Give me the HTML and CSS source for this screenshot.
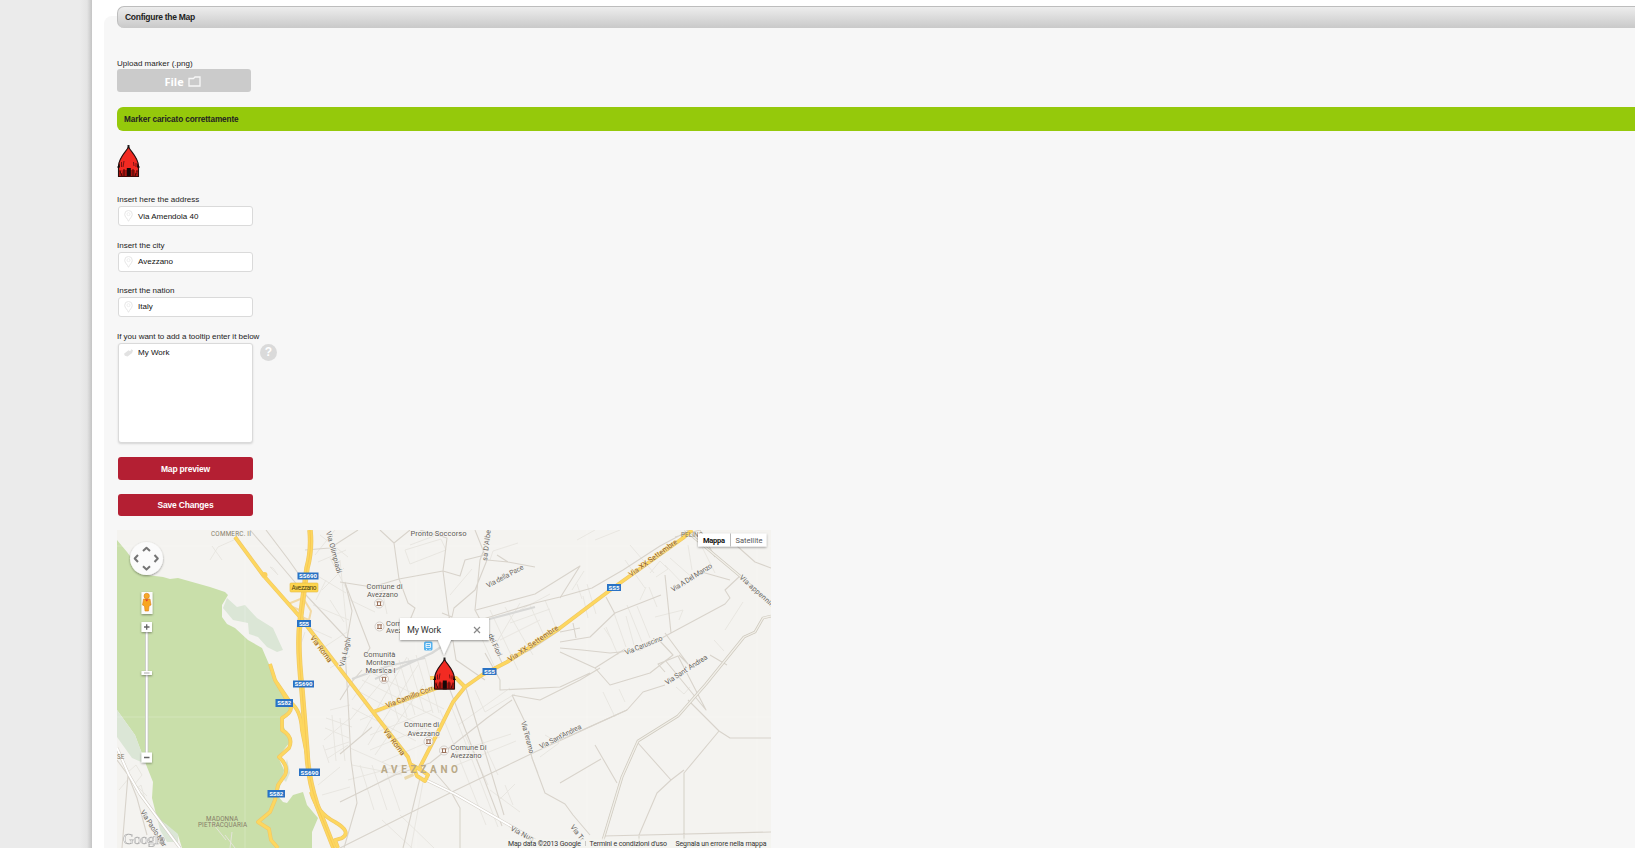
FILE: index.html
```html
<!DOCTYPE html>
<html lang="en">
<head>
<meta charset="utf-8">
<title>Configure the Map</title>
<link rel="stylesheet" href="styles.css">
</head>
<body>
<svg width="0" height="0" class="defs" aria-hidden="true">
  <defs>
    <symbol id="hut" viewBox="0 0 23 32">
      <path d="M10.500 0h2v4h-2z" fill="#222"/>
      <path d="M11.500 2C9 7 2 12 1.500 21v10.500h20V21C21 12 14 7 11.500 2z" fill="#f22a22" stroke="#211" stroke-width="1.100"/>
      <path d="M2 25h19v6.500H2z" fill="#a81510"/>
      <path d="M0 22.500l2.500-4 .5 4zM23 22.500l-2.500-4-.5 4z" fill="#150808"/>
      <path d="M9.800 23h4v9h-4z" fill="#150808"/>
      <path d="M4.500 17v5M7 16l-1 6M16.500 17l.5 4M19 18v4" stroke="#6a1010" fill="none" stroke-width=".9"/>
      <path d="M7 24v7M16 24v7M3 26l2 5M20 26l-2 5M1.500 31.500h20" stroke="#400a08" fill="none"/>
      <path d="M5.500 23l-1 5M18 23l1 5" stroke="#ee3028" fill="none"/>
    </symbol>
    <symbol id="pin" viewBox="0 0 9 12">
      <path d="M4.500 11.300C3.500 8.500.7 7 .7 4.300a3.800 3.800 0 0 1 7.600 0C8.300 7 5.500 8.500 4.500 11.300z" fill="none" stroke="#e6e6e6"/>
      <circle cx="4.500" cy="4.200" r="1.500" fill="none" stroke="#e9e9e9" stroke-width=".8"/>
    </symbol>
  </defs>
</svg>
<div class="page">
  <aside class="side"></aside>
  <main class="main">
    <section class="panel">
      <h1 class="bar">Configure the Map</h1>
      <div class="label label-upload">Upload marker (.png)</div>
      <button class="file">File
        <svg width="13" height="11" viewBox="0 0 13 11"><path d="M1 2.500h4.500L7 1h5v9H1z" fill="none" stroke="#fff" stroke-width="1.300" opacity=".85"/></svg>
      </button>
      <div class="notice">Marker caricato correttamente</div>
      <svg class="marker" width="23" height="32"><use href="#hut"/></svg>
      <div class="field">
        <div class="label l1">Insert here the address</div>
        <div class="input"><svg width="9" height="12"><use href="#pin"/></svg><span class="v1">Via Amendola 40</span></div>
      </div>
      <div class="field">
        <div class="label">Insert the city</div>
        <div class="input"><svg width="9" height="12"><use href="#pin"/></svg><span>Avezzano</span></div>
      </div>
      <div class="field">
        <div class="label">Insert the nation</div>
        <div class="input"><svg width="9" height="12"><use href="#pin"/></svg><span>Italy</span></div>
      </div>
      <div class="field last">
        <div class="label l4">If you want to add a tooltip enter it below</div>
        <div class="row">
          <div class="input area"><svg width="9" height="9" viewBox="0 0 10 9"><path d="M0 6l5-4 2 1 1-2 2 1-1 3-5 4-3-1z" fill="#e2e2e2"/></svg><span>My Work</span></div>
          <span class="help">?</span>
        </div>
      </div>
      <button class="btn preview">Map preview</button>
      <button class="btn save">Save Changes</button>
      <svg class="map" width="654" height="318" viewBox="117 530 654 318">
        <defs>
          <filter id="sh" x="-20%" y="-20%" width="140%" height="150%"><feDropShadow dx="0" dy="1" stdDeviation="1.300" flood-opacity=".4"/></filter>
        </defs>
        <rect x="117" y="530" width="654" height="318" fill="#f4f3f0"/>
        <path class="woods" d="M117 540L127 552L136 564L147 575L163 577L170 579L178 578L210 587L225 592L228 595L222 605L222 617L227 624L235 628L248 640L262 648L268 662L277 682L290 704L290 712L282 722L290 742L278 757L285 772L277 795L283 802L287 803L293 795L303 792L307 805L318 818L312 832L312 848H182L178 835L157 818L152 798L153 782L145 762L135 735L117 710z"/>
        <path class="park" d="M227 598L237 607L245 605L257 618L273 628L283 650L277 652L267 647L258 637L249 634L248 623L233 620L223 608zM117 710L135 735L146 764L132 758L117 737zM157 818L166 824L178 834L178 842L167 842L160 830zM287 759L290 773L286 782L282 778z"/>
        <g class="grid"><path d="M117 546H771M117 717H771M245 530V848M416 530V848M587 530V848M757 530V848"/></g>

        <g class="street">
          <path d="M210 560l8-13 18-8M212 546l10 14M270 567l8 8-5-7zM320 535l28 22M335 530l-20 25M318 562l28-12M316 575l30 18M322 590l22-22M313 605l36 15M326 580l-10 20M330 558l16 30M310 628l22 10M320 650l27-18M330 668l20-12M305 632l-6 18M340 560l8 80M330 600l14 22"/>
          <path d="M372 595l25-10M382 590l5 24M350 600l25 12M410 545l24-9M405 550l5 14 36-14-5-11-36 11zM490 560l3-9 25-8M478 630l18 40M490 610l28 60M505 607l28 48M450 595l22-26M520 603l-26 44M520 610l30-16M510 623l40-14M500 640l40-20M530 605l16 35M545 600l12 30"/>
          <path d="M352 700l18-25M350 720l30-36M362 735l45-78M368 745l50-80M375 755l48-70M362 680l80 40M370 672l74 37M360 692l70 39M352 708l64 33M383 667l16 55M391 662l16 55M399 660l16 55M408 658l16 54M416 655l17 58M425 658l14 55M360 720l58-24M370 735l62-25M370 750l58-24M382 762l58-25M350 748l45 20M352 765l50 10M348 780l55-15M365 790l48-26M360 765l14 45M372 765l15 45M385 768l15 43"/>
          <path d="M475 690l10 22 30-18M458 725l52-37M465 735l23 50M480 735l18 40M455 752l56-18M452 767l64-26M490 790l30 22M499 800l16-16M505 785l8 20M527 745l11 28M545 735l14 8-19 14M440 710l46 115M450 703l48 124M423 782l-12 66M400 815l34 33M382 820l30 28"/>
          <path d="M618 655l-12-28M626 647l-12-34M634 645l-8-29M642 642l-15-37M650 638l-13-32M588 618l-5-22M596 614l-9-30M612 640l-8-12M640 600l6-13M657 607l-8-20M650 573l10-12 8 8-12 8M625 560l20 28M630 545l24 28M572 590l12-19M577 584l5 15M688 545l4 25M715 573l-18-36M665 565l20 21M670 558l25 22M577 540l18-10M595 540l25-10M655 617l28-7-4 10M725 630l18-28M714 640l10 11M603 692l12 25M625 702l-6-13M676 687l8 7 6-7"/>
          <path d="M318 785l22-18M322 795l28-8M325 750l24-8M328 758l20-13M324 740l26-22M326 718l26 9M325 728l24 10M323 745l6 18M332 715l4 46M340 718l5 43M330 710l20-5M119 790l10-12 18 18M127 773l9-8 6 10-8 10zM135 790l6-5 5 18M210 820l16 20M225 835l10 13M232 832l-2 16"/>
        </g>
        <g class="minor">
          <path d="M250 530L277 561L305 594L350 642M266 530L288 559L310 590M380 530L394 543L410 530M394 543L399 579L372 587L340 582M399 579L443 571L447 538L420 530M443 571L460 576L465 560L485 555L475 530M345 582L352 611L345 651L348 700L351 760L357 803L344 848M399 579L408 603L415 608L410 620M443 571L448 610L456 660L485 680M490 530L487 542L480 560L475 610L493 644L503 665M487 560L475 590L454 608L452 617L442 613M487 560L508 562L535 567M476 610L535 594L580 566L560 598M508 562L497 555M560 630L530 650L511 659"/>
          <path d="M345 583L370 648L365 656M480 620L535 603L560 597L592 588L623 570L660 546L690 530M560 642L590 637L615 613L661 595M606 597L615 614M665 575L671 633L640 650L610 653L582 650L560 648M671 633L725 604L730 598L725 590L740 576M698 571L730 580M715 557L700 530L675 537M737 546L755 562L771 568M573 623L576 638M560 632L580 628"/>
          <path d="M560 652L595 668L610 685L650 673L673 655L658 639M560 687L590 673M595 668L625 649M665 633L688 664L679 655M665 672L658 664L678 656L706 710L665 660M688 700L719 731L684 773V847M710 655L727 665M719 731L730 738H771M560 740L627 710L643 692L665 685M595 745L617 783M560 783L601 759M638 743L671 780L684 770M671 780L657 793L639 835V848M603 836L771 832M512 695L540 700L580 680L600 668M560 687L500 690L500 680L485 653"/>
          <path d="M512 695L525 722L532 758L545 793L565 804L573 815L590 835M627 710L535 752L452 792L340 848M340 802L395 775L430 763L487 718L512 700M465 685L480 735L504 815M450 690L475 755L502 826M433 770L450 790L460 808L460 848M420 778L403 848M340 700L350 684L362 670M340 754L372 727M117 760L128 775L122 848M128 775L137 798L147 835M358 530L330 548L305 550"/>
        </g>
        <path class="rail" d="M375 679L432 653L478 622L535 607M352 679L388 666L425 658"/>
        <path class="dual" d="M685 530L740 576L771 604M603 840L622 777L638 741L678 716L706 684L744 637L755 632L763 618L771 616"/>
        <path class="dual-core" d="M685 530L740 576L771 604M603 840L622 777L638 741L678 716L706 684L744 637L755 632L763 618L771 616"/>
        <path class="white-edge" d="M117 748L129 775L140 794L180 848M426 780L455 794L535 840"/>
        <path class="white-core" d="M117 748L129 775L140 794L180 848M426 780L455 794L535 840"/>

        <path class="ramp" d="M288 604L303 598L311 611L309 620L304 618L299 614M290 606L302 611"/>
        <g class="hwy-edge">
          <path d="M235 537L263 575L300 617L350 682L373 712L408 757L413 772M420 767L440 728L453 702L465 687L482 675L507 662L560 628L613 588L683 538L692 530M373 712L437 688L448 681M465 687L456 678L430 678M413 766L417 776L425 781L428 775L421 770L410 764"/>
          <path d="M270 664L275 680L284 695L291 708Q291 713 282 718L282 730Q294 737 289 748L279 757Q289 766 285 775L278 785L275 800L270 812L258 822L269 829L271 840L278 848M277 683L290 702Q301 710 302 730L307 755M311 792Q317 813 335 822Q352 832 342 838L335 840L338 848"/>
          <path class="wide" d="M310 530Q312 550 307 568L303 598L300 622Q297 645 302 690L307 752Q308 778 317 805L334 848"/>
        </g>
        <g class="hwy">
          <path d="M235 537L263 575L300 617L350 682L373 712L408 757L413 772M420 767L440 728L453 702L465 687L482 675L507 662L560 628L613 588L683 538L692 530M373 712L437 688L448 681M465 687L456 678L430 678M413 766L417 776L425 781L428 775L421 770L410 764"/>
          <path d="M270 664L275 680L284 695L291 708Q291 713 282 718L282 730Q294 737 289 748L279 757Q289 766 285 775L278 785L275 800L270 812L258 822L269 829L271 840L278 848M277 683L290 702Q301 710 302 730L307 755M311 792Q317 813 335 822Q352 832 342 838L335 840L338 848"/>
          <path class="wide" d="M310 530Q312 550 307 568L303 598L300 622Q297 645 302 690L307 752Q308 778 317 805L334 848"/>
        </g>
        <path d="M310 530Q312 550 307 568L303 598L300 622Q297 645 302 690L307 752Q308 778 317 805L334 848" fill="none" stroke="#f3c04f" stroke-width=".6"/>
        <circle cx="264.500" cy="575" r="3" fill="#fbd05b"/>
        <path d="M404 777l9-4 1 3-9 4z" fill="#ead9ae"/>

        <g class="shield">
          <rect x="297.500" y="572.500" width="21" height="7"/><rect x="297" y="620" width="14" height="7"/><rect x="293" y="680.500" width="21" height="7"/><rect x="275.500" y="699" width="17.500" height="8"/><rect x="299" y="768.500" width="21" height="7.500"/><rect x="267.500" y="790" width="17.500" height="7.500"/><rect x="607" y="584" width="14" height="7"/><rect x="482.500" y="668" width="14" height="7"/>
        </g>
        <g class="shield-text">
          <text x="308" y="578.300" textLength="18">SS690</text><text x="304" y="625.800" textLength="10">SS5</text><text x="303.500" y="686.300" textLength="18">SS690</text><text x="284.200" y="705.400" textLength="14">SS82</text><text x="309.500" y="774.600" textLength="18">SS690</text><text x="276.200" y="796" textLength="14">SS82</text><text x="614" y="589.900" textLength="11">SS5</text><text x="489.500" y="673.900" textLength="11">SS5</text>
        </g>
        <rect x="290" y="583" width="28" height="9" rx="1" fill="#fdd54f" stroke="#e8bd45" stroke-width=".6"/>
        <text class="lab dark" x="291.500" y="590" textLength="25">Avezzano</text>

        <g class="lab">
          <text class="area-name" x="211" y="535.500" textLength="40">COMMERC. II</text>
          <text class="area-name" x="681" y="536.500" textLength="22">PELINO</text>
          <text class="area-name" x="206" y="821" textLength="32">MADONNA</text>
          <text class="area-name" x="198" y="827" textLength="49">PIETRACQUARIA</text>
          <text class="area-name" x="117" y="758.500">SE</text>
          <text x="410.500" y="535.500" textLength="56">Pronto Soccorso</text>
          <text x="366.500" y="589" textLength="36">Comune di</text><text x="367" y="597" textLength="31">Avezzano</text>
          <text x="386" y="625.500">Com</text><text x="386" y="633.300">Avez</text>
          <text x="363.500" y="656.500" textLength="32">Comunità</text><text x="366" y="664.500" textLength="29">Montana</text><text x="365.500" y="672.500" textLength="30">Marsica I</text>
          <text x="404" y="727" textLength="35">Comune di</text><text x="407.500" y="735.500" textLength="32">Avezzano</text>
          <text x="450.500" y="749.500" textLength="36">Comune Di</text><text x="450.500" y="757.500" textLength="31">Avezzano</text>
        </g>
        <g class="road-name">
          <text transform="translate(326 532) rotate(75)" textLength="43">Via Olimpiadi</text>
          <text transform="translate(344 667) rotate(-77)" textLength="30">Via Laghi</text>
          <text transform="translate(487 561) rotate(-83)" textLength="31">sa D'Albe</text>
          <text transform="translate(488 588) rotate(-28)" textLength="41">Via della Pace</text>
          <text transform="translate(488 635) rotate(66)" textLength="24">dei Fiori</text>
          <text transform="translate(673 592) rotate(-32)" textLength="47">Via A Del Manzo</text>
          <text transform="translate(739 578) rotate(42)" textLength="44">Via appennin</text>
          <text transform="translate(626 655) rotate(-22)" textLength="40">Via Caruscino</text>
          <text transform="translate(667 685) rotate(-33)" textLength="49">Via Sant' Andrea</text>
          <text transform="translate(541 749) rotate(-27)" textLength="46">Via Sant'Andrea</text>
          <text transform="translate(521 722) rotate(75)" textLength="33">Via Teramo</text>
          <text transform="translate(570 827) rotate(53)">Via Tr</text>
          <text transform="translate(510 830) rotate(28)">Via Nuo</text>
          <text transform="translate(140 812) rotate(57)" textLength="42">Via Paolo Mar</text>
        </g>
        <g class="road-name gold">
          <text transform="translate(310 638) rotate(53)" textLength="31">Via Roma</text>
          <text transform="translate(383 731) rotate(53)" textLength="31">Via Roma</text>
          <text transform="translate(387 708) rotate(-21)" textLength="50">Via Camillo Corr</text>
          <text transform="translate(510 662) rotate(-34)" textLength="59">Via XX Settembre</text>
          <text transform="translate(631 577) rotate(-36)" textLength="58">Via XX Settembre</text>
        </g>
        <text class="city" x="381" y="772.500" textLength="77">AVEZZANO</text>
        <g class="poi">
          <circle cx="379" cy="603.500" r="4.500"/><circle cx="379.500" cy="626.500" r="4.500"/><circle cx="384" cy="679" r="4.500"/><circle cx="428.500" cy="741.500" r="4.500"/><circle cx="444" cy="750.500" r="4.500"/>
          <path d="M376.500 601.800h5M376.500 605.500h5M377.500 602v3M380.500 602v3M377 624.800h5M377 628.500h5M378 625v3M381 625v3M381.500 677.300h5M381.500 681h5M382.500 677.500v3M385.500 677.500v3M426 739.800h5M426 743.500h5M427 740v3M430 740v3M441.500 748.800h5M441.500 752.500h5M442.500 749v3M445.500 749v3"/>
        </g>
        <rect x="424" y="641.500" width="8.500" height="9" rx="1.500" fill="#55b2ee"/><path d="M426 643.500h4.500v4h-4.500zM426 649.500h1M429.500 649.500h1M426 645.500h4.500" fill="none" stroke="#fff" stroke-width=".8"/>

        <use href="#hut" x="433" y="657" width="23" height="33"/>
        <g filter="url(#sh)"><path d="M400 618h89v22h-38l-7 15-6-15h-38z" fill="#fff"/></g>
        <text class="info" x="407" y="633" textLength="34">My Work</text>
        <path d="M474 627l6 6M480 627l-6 6" stroke="#888" stroke-width="1.200"/>

        <g filter="url(#sh)"><circle cx="146.500" cy="558.500" r="16.500" fill="#fbfbfb"/></g>
        <path d="M143 551l3.500-3.300 3.500 3.300M143 566.300l3.500 3.300 3.500-3.300M138 555l-3.300 3.500 3.300 3.500M154.500 555l3.300 3.500-3.300 3.500" fill="none" stroke="#747474" stroke-width="2"/>
        <g filter="url(#sh)"><rect x="141.500" y="592" width="11" height="22" fill="#fbfbfb"/></g>
        <circle cx="146.700" cy="596" r="2.700" fill="#f7a928" stroke="#d9811b" stroke-width=".6"/><path d="M143.500 599h6.500l1 6-2 1-.5 5h-3.500l-.5-5-2-1z" fill="#f8a51e" stroke="#d9811b" stroke-width=".6"/><path d="M145 599.500l1.700 2 1.700-2z" fill="#e13a30"/>
        <rect x="145.500" y="630" width="2.500" height="125" fill="#fff" stroke="#c4c4c4" stroke-width=".7"/>
        <g filter="url(#sh)" fill="#fff"><rect x="141.500" y="622" width="10.500" height="10"/><rect x="141.500" y="671" width="10.500" height="4"/><rect x="141.500" y="752.500" width="10.500" height="10"/></g>
        <path d="M144 627h5.500M146.700 624.300v5.500M144 757.500h5.500" stroke="#666" stroke-width="1.300"/><path d="M144 673h5.500" stroke="#aaa"/>

        <g filter="url(#sh)"><rect x="698" y="533.500" width="68.500" height="13" fill="#fff"/></g>
        <path d="M730.500 533.500v13" stroke="#aaa" stroke-width=".8"/>
        <text class="switch on" x="703" y="543" textLength="22">Mappa</text><text class="switch" x="735.500" y="543" textLength="27">Satellite</text>
        <text class="google" x="123" y="843.500" textLength="42">Google</text>
        <rect x="505" y="838.500" width="266" height="10" fill="#f4f3f0" opacity=".7"/>
        <g class="legal"><text x="508" y="846" textLength="73">Map data ©2013 Google</text><path d="M585.500 841v5" stroke="#aaa" stroke-width=".6"/><text x="589.500" y="846" textLength="77.500">Termini e condizioni d'uso</text><text x="675.500" y="846" textLength="91">Segnala un errore nella mappa</text></g>
      </svg>
    </section>
  </main>
</div>
</body>
</html>
```
FILE: styles.css
```css
* { box-sizing: border-box; }
body { margin: 0; background: #fff; font-family: "Liberation Sans", Arial, sans-serif; font-size: 8px; color: #222; }
.defs { display: block; }
.page { display: flex; height: 848px; overflow: hidden; }
.side { width: 92px; flex: none; background: linear-gradient(to right, #ebebeb 0, #ebebeb 80px, #e4e4e4 87px, #c4c4c4 92px); }
.main { flex: 1; min-width: 0; padding: 16px 0 0 12px; }
.panel { height: 832px; padding-left: 13px; background: #f7f7f7; border-top-left-radius: 8px; display: flex; flex-direction: column; align-items: flex-start; }
.bar { width: 100%; height: 22px; margin: -10px 0 0; padding-left: 7px; flex: none; border: solid #bdbdbd; border-width: 1px 0 0 1px; border-radius: 7px 0 0 7px; background: linear-gradient(#ededed, #c9c9c9); font-size: 8.500px; line-height: 20px; font-weight: bold; letter-spacing: -.28px; }
.label { height: 10px; line-height: 12px; white-space: nowrap; color: #1c1c1c; letter-spacing: 0; }
.label-upload { margin-top: 30px; }
.l4 { letter-spacing: -.02px; }
button { border: 0; padding: 0; font-family: inherit; color: #fff; flex: none; }
.file { width: 134px; height: 23px; margin-top: 1px; border-radius: 3px; background: #cbcbcb; font: bold 11px/24px "Open Sans", sans-serif; display: flex; justify-content: center; align-items: center; gap: 4px; padding: 2px 3px 0 0; }
.notice { width: 100%; height: 24px; margin-top: 15px; padding-left: 7px; flex: none; border-radius: 6px 0 0 6px; background: #95c90b; font-weight: bold; font-size: 8.200px; line-height: 25px; letter-spacing: -.1px; }
.marker { margin: 14px 0 17px; flex: none; }
.field { height: 45.500px; flex: none; }
.input { width: 135px; height: 20px; margin: 2px 0 0 1px; display: flex; align-items: center; gap: 5px; padding-left: 5px; background: #fff; border: 1px solid #dadada; border-radius: 3px; line-height: 10px; color: #111; }
.v1 { padding-top: 1px; }
.last { height: 126.500px; }
.row { display: flex; gap: 7px; }
.area { height: 100px; align-items: flex-start; padding-top: 4px; box-shadow: 0 1px 2px #d5d5d5; }
.help { width: 17px; height: 17px; margin-top: 3px; border-radius: 50%; background: #dadada; color: #fff; font: bold 12px/17px "Liberation Sans", sans-serif; text-align: center; }
.btn { width: 135px; margin-left: 1px; border-radius: 3px; background: #b41f33; font-weight: bold; font-size: 8.500px; letter-spacing: -.18px; }
.preview { height: 23px; padding-top: 1px; }
.save { height: 22px; margin-top: 14px; }
.map { display: block; margin-top: 14px; flex: none; font-family: Roboto, sans-serif; }
.map path { stroke-linejoin: round; }
.woods { fill: #c9dfaa; }
.park { fill: #dbe6d6; }
.grid { fill: none; stroke: #fff; stroke-width: .6; opacity: .35; }
.street { fill: none; stroke: #e7e4df; stroke-width: .9; }
.minor { fill: none; stroke: #d8d3cb; stroke-width: 1.100; }
.rail { fill: none; stroke: #d8d8d6; stroke-width: 2.200; }
.dual { fill: none; stroke: #cfcabf; stroke-width: 2.800; }
.dual-core { fill: none; stroke: #f1efe9; stroke-width: 1.300; }
.white-edge { fill: none; stroke: #d3cec6; stroke-width: 3; }
.white-core { fill: none; stroke: #fff; stroke-width: 1.900; }
.ramp { fill: none; stroke: #f2d9a4; stroke-width: 2; }
.hwy-edge { fill: none; stroke: #efc767; stroke-width: 3.900; }
.hwy-edge .wide { stroke-width: 5.500; }
.hwy { fill: none; stroke: #fdd75f; stroke-width: 2.700; }
.hwy .wide { stroke-width: 4.300; }
.shield { fill: #2a72c4; }
.shield-text { fill: #fff; font-size: 6px; font-weight: bold; text-anchor: middle; }
.lab { font-size: 7.600px; fill: #5d5a56; paint-order: stroke; stroke: #f7f6f3; stroke-width: 1.200px; }
.lab.dark { fill: #4a3c10; stroke: none; font-size: 6.500px; }
.area-name { font-size: 6.300px; fill: #857c68; stroke: none; }
.road-name { font-size: 7.200px; fill: #686560; paint-order: stroke; stroke: #f5f4f1; stroke-width: 1.200px; }
.gold { fill: #8f5b17; stroke: #fbe6ad; stroke-width: .8px; }
.city { font-size: 10px; font-weight: bold; fill: #b9a987; }
.poi circle { fill: #f8f7f5; stroke: #c9c4bf; stroke-width: .8; }
.poi path { fill: none; stroke: #9a7059; stroke-width: 1; }
.info { font-size: 9px; fill: #333; }
.switch { font-size: 7.500px; fill: #555; }
.on { font-weight: bold; fill: #111; }
.google { font-family: "Liberation Serif", serif; font-size: 15px; fill: #f5f5f5; stroke: #999; stroke-width: .5px; opacity: .85; }
.legal { font-size: 7px; fill: #333; }
```
